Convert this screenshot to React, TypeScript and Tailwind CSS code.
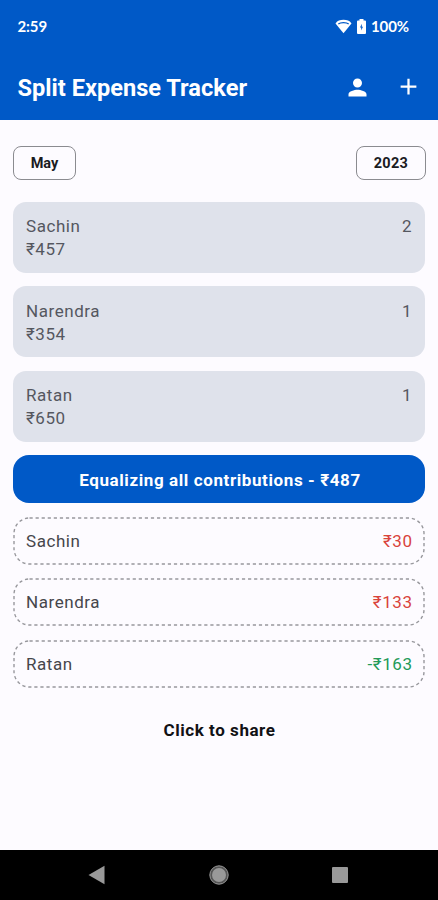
interface Contribution {
  name: string;
  amount: string;
  count: number;
}

interface Balance {
  name: string;
  amount: string;
  owes: boolean;
}

const contributions: Contribution[] = [
  { name: "Sachin", amount: "₹457", count: 2 },
  { name: "Narendra", amount: "₹354", count: 1 },
  { name: "Ratan", amount: "₹650", count: 1 },
];

const balances: Balance[] = [
  { name: "Sachin", amount: "₹30", owes: true },
  { name: "Narendra", amount: "₹133", owes: true },
  { name: "Ratan", amount: "-₹163", owes: false },
];

function StatusBar() {
  return (
    <div className="flex h-[54px] items-center justify-between pr-[29px] pb-px pl-[17.500px] font-[Lato,sans-serif] text-[15px] font-bold tracking-[-0.1px]">
      <span>2:59</span>
      <div className="flex items-center">
        <svg width="17" height="15" viewBox="0 0 17 15" className="mr-[5px]">
          <path d="M.5 4.5C2.500 1.500 5 .8 8.500.8s6 .7 8 3.700L8.500 14.200z" fill="#fff" />
          <path d="M3.300 5C5.500 3.100 11.500 3.100 13.700 5" fill="none" stroke="#0059c7" strokeWidth="1.200" />
        </svg>
        <svg width="9" height="15" viewBox="0 0 9 15" className="mr-[5px]">
          <path d="M2.500 0h4v1.500H8q1 0 1 1V14q0 1-1 1H1q-1 0-1-1V2.500q0-1 1-1h1.500z" fill="#fff" />
          <path d="M4.800 4.800L3 8.500h1.200v3l1.800-3.800H4.800z" fill="#0059c7" />
        </svg>
        <span>100%</span>
      </div>
    </div>
  );
}

function Header() {
  return (
    <header className="h-[120px] bg-[#0059c7] text-white">
      <StatusBar />
      <div className="flex h-[66px] items-center pr-[16px] pl-[17.500px]">
        <h1 className="flex-1 pt-[3px] text-[23.600px] font-bold">Split Expense Tracker</h1>
        <svg width="27" height="27" viewBox="0 0 24 24" fill="#fff" className="mr-[24px]">
          <path d="M12 12c2.210 0 4-1.790 4-4s-1.790-4-4-4-4 1.790-4 4 1.790 4 4 4zm0 2c-2.670 0-8 1.340-8 4v2h16v-2c0-2.660-5.330-4-8-4z" />
        </svg>
        <svg width="27" height="27" viewBox="0 0 24 24" fill="#fff" className="-mt-px">
          <path d="M19 13h-6v6h-2v-6H5v-2h6V5h2v6h6v2z" />
        </svg>
      </div>
    </header>
  );
}

// CSS dashed borders give no control over the dash length
function DashedOutline() {
  return (
    <svg className="absolute inset-0 size-full" fill="none">
      <rect
        x="1"
        y="1"
        width="410"
        height="46"
        rx="15.500"
        stroke="#98989d"
        strokeWidth="1.400"
        strokeDasharray="3.200 2.870"
      />
    </svg>
  );
}

function NavBar() {
  return (
    <nav className="flex h-[50.500px] items-center bg-black">
      <svg width="17" height="20" viewBox="0 0 17 20" className="ml-[88px]">
        <path d="M.5 10L16.500.7v18.600z" fill="#999" />
      </svg>
      <svg width="20" height="20" viewBox="0 0 20 20" className="ml-[104px]">
        <circle cx="10" cy="10" r="9.200" fill="#555" stroke="#999" strokeWidth="1" />
        <circle cx="10" cy="10" r="7" fill="#999" />
      </svg>
      <div className="ml-[103px] size-[16px] rounded-[1px] bg-[#999]" />
    </nav>
  );
}

export default function App() {
  return (
    <div className="flex h-[900px] w-[438px] flex-col bg-[#fdfbff] font-[Roboto,sans-serif]">
      <Header />
      <main className="flex-1 px-[13px] pt-[26px]">
        <div className="flex justify-between text-[14.500px] font-bold text-[#1b1b1f]">
          <button className="h-[34px] w-[63px] rounded-lg border border-[#8b8b90] pt-px">May</button>
          <button className="-mr-px h-[34px] w-[70px] rounded-lg border border-[#8b8b90] pt-px tracking-[0.3px]">2023</button>
        </div>

        <div className="mt-[21.500px] flex flex-col gap-[13.500px]">
          {contributions.map((c) => (
            <div
              key={c.name}
              className="flex h-[71px] justify-between rounded-[13px] bg-[#dfe2eb] px-[13px] pt-[13.500px] text-[17px] leading-[23px] tracking-[0.550px] text-[#55575f]"
            >
              <div>
                <p>{c.name}</p>
                <p>{c.amount}</p>
              </div>
              <span>{c.count}</span>
            </div>
          ))}
        </div>

        <button className="mt-[13.500px] flex h-[48px] w-full items-center justify-center rounded-[16px] bg-[#0059c7] pt-[3px] pl-[2px] text-[17px] font-bold tracking-[0.600px] text-white">
          Equalizing all contributions - ₹487
        </button>

        <div className="mt-[13.500px] flex flex-col gap-[13.500px]">
          {balances.map((b) => (
            <div
              key={b.name}
              className="relative flex h-[48px] items-center justify-between px-[13px] pt-[2px] text-[17px] tracking-[0.550px] text-[#46464b]"
            >
              <DashedOutline />
              <span>{b.name}</span>
              <span className={b.owes ? "-mr-[0.500px] text-[#d9433b]" : "-mr-[0.500px] text-[#239a58]"}>{b.amount}</span>
            </div>
          ))}
        </div>

        <button className="mt-[32px] block w-full pl-px text-center text-[17px] leading-5 font-bold tracking-[0.550px] text-[#111114]">
          Click to share
        </button>
      </main>
      <NavBar />
    </div>
  );
}
